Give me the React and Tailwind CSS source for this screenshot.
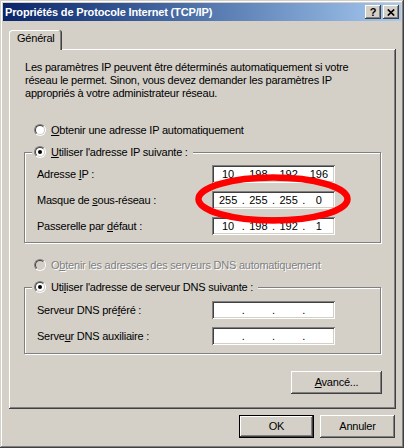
import React from 'react';

const raised =
  'shadow-[inset_-1px_-1px_0_#404040,inset_1px_1px_0_#ffffff,inset_-2px_-2px_0_#808080,inset_2px_2px_0_#d4d0c8]';

function Radio({ checked, disabled }) {
  return (
    <span className="block w-[12px] h-[12px] shrink-0 rounded-full border border-t-[#808080] border-l-[#808080] border-r-white border-b-white">
      <span
        className={
          disabled
            ? 'flex items-center justify-center w-full h-full rounded-full border border-t-[#404040] border-l-[#404040] border-r-[#d4d0c8] border-b-[#d4d0c8] bg-[#d4d0c8]'
            : 'flex items-center justify-center w-full h-full rounded-full border border-t-[#404040] border-l-[#404040] border-r-[#d4d0c8] border-b-[#d4d0c8] bg-white'
        }
      >
        {checked && <span className="block w-[4px] h-[4px] rounded-full bg-black" />}
      </span>
    </span>
  );
}

function IpField({ octets }) {
  return (
    <div className="flex items-center w-[123px] h-[18px] bg-white px-[1px] tracking-normal shadow-[inset_1px_1px_0_#808080,inset_-1px_-1px_0_#ffffff,inset_2px_2px_0_#404040,inset_-2px_-2px_0_#d4d0c8]">
      {octets.map((o, i) => (
        <React.Fragment key={i}>
          {i > 0 && <span className="w-0 flex justify-center">.</span>}
          <span className="w-[30.25px] text-center">{o}</span>
        </React.Fragment>
      ))}
    </div>
  );
}

function Row({ label, octets }) {
  return (
    <div className="flex items-center">
      <span className="w-[175px] shrink-0">{label}</span>
      <IpField octets={octets} />
    </div>
  );
}

function Group({ legend, children, className }) {
  return (
    <fieldset className="ml-[15px] w-[357px] border border-[#808080] shadow-[1px_1px_0_#ffffff,inset_1px_1px_0_#ffffff]">
      <legend className="ml-[7px] pl-[2px] pr-[5px] h-[16px] flex items-center gap-[5px] bg-[#d4d0c8]">
        <Radio checked />
        <span>{legend}</span>
      </legend>
      <div className={className}>{children}</div>
    </fieldset>
  );
}

export default function App() {
  return (
    <div className="relative w-[404px] h-[448px] bg-[#d4d0c8] p-[3px] flex flex-col text-[11px] leading-[13px] tracking-[-0.22px] text-black font-['Liberation_Sans',Arial,sans-serif] shadow-[inset_-1px_-1px_0_#404040,inset_1px_1px_0_#d4d0c8,inset_-2px_-2px_0_#808080,inset_2px_2px_0_#ffffff]">
      {/* title bar */}
      <div className="h-[18px] flex items-center justify-between pl-[2px] pr-[2px] bg-linear-to-r from-[#0a246a] to-[#a6caf0]">
        <span className="font-bold text-white tracking-[-0.15px]">Propriétés de Protocole Internet (TCP/IP)</span>
        <div className="flex gap-[2px]">
          <div className={'w-[16px] h-[14px] bg-[#d4d0c8] flex items-center justify-center font-bold text-[11px] ' + raised}>
            ?
          </div>
          <div className={'w-[16px] h-[14px] bg-[#d4d0c8] flex items-center justify-center ' + raised}>
            <svg width="8" height="7" viewBox="0 0 8 7">
              <path d="M0.8 0.5L7.2 6.5M7.2 0.5L0.8 6.5" stroke="#000" strokeWidth="1.7" />
            </svg>
          </div>
        </div>
      </div>

      <div className="ml-[6px] mt-[9px] flex flex-col">
        {/* tab */}
        <div className="relative z-10 w-[53px] h-[20px] -mb-[1px] pl-[8px] pt-[2px] bg-[#d4d0c8] rounded-t-[3px] shadow-[inset_-1px_0_0_#404040,inset_1px_1px_0_#ffffff,inset_-2px_0_0_#808080]">
          Général
        </div>

        {/* panel */}
        <div className="w-[387px] h-[360px] flex flex-col shadow-[inset_-1px_-1px_0_#404040,inset_1px_1px_0_#ffffff,inset_-2px_-2px_0_#808080]">
          <p className="ml-[16px] mt-[12px]">
            Les paramètres IP peuvent être déterminés automatiquement si votre
            <br />
            réseau le permet. Sinon, vous devez demander les paramètres IP
            <br />
            appropriés à votre administrateur réseau.
          </p>

          <div className="ml-[25px] mt-[22px] h-[16px] flex items-center gap-[5px]">
            <Radio />
            <span>
              <u>O</u>btenir une adresse IP automatiquement
            </span>
          </div>

          <div className="mt-[6px]">
            <Group
              className="pl-[12px] pt-[5px] pb-[7px] flex flex-col gap-[8px]"
              legend={
                <>
                  <u>U</u>tiliser l'adresse IP suivante :
                </>
              }
            >
              <Row
                label={
                  <>
                    Adresse <u>I</u>P :
                  </>
                }
                octets={['10', '198', '192', '196']}
              />
              <Row
                label={
                  <>
                    Masque de <u>s</u>ous-réseau :
                  </>
                }
                octets={['255', '255', '255', '0']}
              />
              <Row
                label={
                  <>
                    Passerelle par <u>d</u>éfaut :
                  </>
                }
                octets={['10', '198', '192', '1']}
              />
            </Group>
          </div>

          <div className="ml-[25px] mt-[14px] h-[16px] flex items-center gap-[5px] text-[#808080] [text-shadow:1px_1px_0_#ffffff]">
            <Radio disabled />
            <span>
              O<u>b</u>tenir les adresses des serveurs DNS automatiquement
            </span>
          </div>

          <div className="mt-[6px]">
            <Group
              className="pl-[12px] pt-[6px] pb-[8px] flex flex-col gap-[8px]"
              legend={
                <>
                  Uti<u>l</u>iser l'adresse de serveur DNS suivante :
                </>
              }
            >
              <Row
                label={
                  <>
                    Serveur DNS pré<u>f</u>éré :
                  </>
                }
                octets={['', '', '', '']}
              />
              <Row
                label={
                  <>
                    Serve<u>u</u>r DNS auxiliaire :
                  </>
                }
                octets={['', '', '', '']}
              />
            </Group>
          </div>

          <div className="mt-[17px] mr-[14px] self-end">
            <button className={'w-[91px] h-[23px] bg-[#d4d0c8] flex items-center justify-center ' + raised}>
              <span>
                <u>A</u>vancé...
              </span>
            </button>
          </div>
        </div>
      </div>

      {/* dialog buttons */}
      <div className="mt-[6px] pr-[6px] flex justify-end gap-[6px]">
        <button className="w-[75px] h-[23px] bg-[#d4d0c8] flex items-center justify-center shadow-[inset_0_0_0_1px_#000000,inset_-2px_-2px_0_#404040,inset_2px_2px_0_#ffffff,inset_-3px_-3px_0_#808080]">
          OK
        </button>
        <button className={'w-[75px] h-[23px] bg-[#d4d0c8] flex items-center justify-center ' + raised}>
          Annuler
        </button>
      </div>

      {/* red annotation around subnet mask */}
      <svg
        className="absolute left-[195px] top-[174px] pointer-events-none"
        width="156"
        height="50"
        viewBox="0 0 156 50"
      >
        <ellipse cx="78" cy="25" rx="74.5" ry="21.5" fill="none" stroke="#ff0000" strokeWidth="6.5" />
      </svg>
    </div>
  );
}
